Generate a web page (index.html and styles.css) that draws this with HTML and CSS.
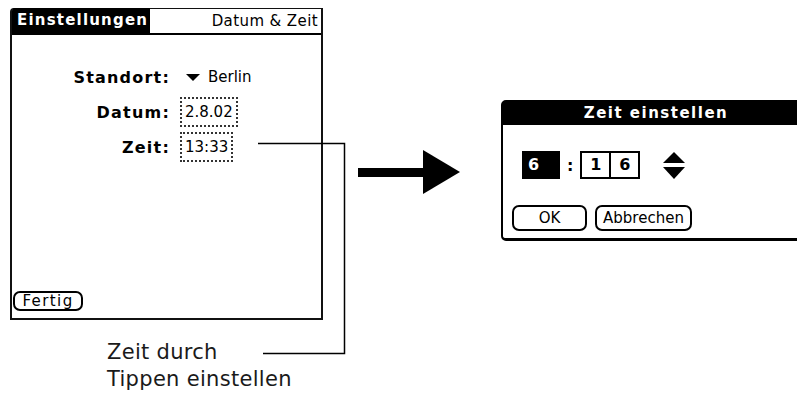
FILE: index.html
```html
<!DOCTYPE html>
<html lang="de">
<head>
    <meta charset="utf-8">
    <meta name="viewport" content="width=device-width, initial-scale=1.0">
    <title>Datum &amp; Zeit</title>
    <link rel="stylesheet" href="styles.css">
</head>
<body>
    <div class="page">
        <div class="left">
            <div class="screen">
                <div class="titlebar">
                    <span class="tab">Einstellungen</span>
                    <span class="panel">Datum &amp; Zeit</span>
                </div>
                <div class="fields">
                    <span class="label">Standort:</span>
                    <span class="value">
                        <svg class="drop" width="14" height="7" viewBox="0 0 14 7"><polygon points="0,0 14,0 7,7" fill="#000"/></svg>
                        <span class="berlin">Berlin</span>
                    </span>
                    <span class="label">Datum:</span>
                    <span class="value"><span class="dotted">2.8.02</span></span>
                    <span class="label">Zeit:</span>
                    <span class="value"><span class="dotted">13:33</span></span>
                </div>
                <button class="btn fertig" type="button">Fertig</button>
            </div>
            <p class="caption">Zeit durch<br>Tippen einstellen</p>
        </div>

        <svg class="arrow" width="102" height="44" viewBox="0 0 102 44">
            <rect x="0" y="18" width="66" height="9" fill="#000"/>
            <polygon points="65,0 102,22 65,44" fill="#000"/>
        </svg>

        <div class="dialog">
            <div class="dialog-title">Zeit einstellen</div>
            <div class="time-row">
                <span class="hour">6</span>
                <span class="colon">:</span>
                <span class="minutes">
                    <span class="digit">1</span>
                    <span class="digit">6</span>
                </span>
                <svg class="spin" width="22" height="27" viewBox="0 0 22 27">
                    <polygon points="0,11 22,11 11,0" fill="#000"/>
                    <polygon points="0,15 22,15 11,27" fill="#000"/>
                </svg>
            </div>
            <div class="buttons">
                <button class="btn ok" type="button">OK</button>
                <button class="btn cancel" type="button">Abbrechen</button>
            </div>
        </div>

        <svg class="callout" width="797" height="393" viewBox="0 0 797 393">
            <polyline points="258,143.5 344.5,143.5 344.5,353.5 263,353.5" fill="none" stroke="#000" stroke-width="1.5"/>
        </svg>
    </div>
</body>
</html>
```

FILE: styles.css
```css
body {
    margin: 0;
    width: 797px;
    height: 393px;
    overflow: hidden;
    background-color: #ffffff;
    font-family: "DejaVu Sans", sans-serif;
    color: #000;
}

.page {
    position: relative;
    display: flex;
    align-items: flex-start;
    padding: 8px 0 0 10px;
    height: 385px;
}

.left {
    width: 313px;
    flex-shrink: 0;
}

.screen {
    box-sizing: border-box;
    width: 313px;
    height: 312px;
    border: 2px solid #111;
    border-top-width: 1px;
    border-radius: 4px 0 0 0;
    display: flex;
    flex-direction: column;
}

.titlebar {
    display: flex;
    justify-content: space-between;
    align-items: stretch;
    height: 24px;
    border-bottom: 2px solid #000;
}

.tab {
    background-color: #000;
    color: #fff;
    font-weight: bold;
    font-size: 15px;
    letter-spacing: 1.2px;
    padding: 0 2px 0 5px;
    line-height: 25px;
    margin-top: -1px;
    border-radius: 3px 0 0 0;
}

.panel {
    font-size: 15px;
    letter-spacing: 0.4px;
    line-height: 24px;
    padding-right: 3px;
}

.fields {
    display: grid;
    grid-template-columns: 158px auto;
    grid-auto-rows: 30px;
    row-gap: 5px;
    column-gap: 10px;
    align-items: center;
    margin-top: 27px;
}

.label {
    text-align: right;
    font-weight: bold;
    font-size: 16px;
    letter-spacing: 1.2px;
}

.value {
    display: flex;
    align-items: center;
    font-size: 15px;
}

.drop {
    margin-left: 6px;
}

.berlin {
    margin-left: 8px;
}

.dotted {
    box-sizing: border-box;
    height: 30px;
    line-height: 26px;
    padding: 0 3px;
    border: 2px dotted #333;
}

.btn {
    box-sizing: border-box;
    font-family: "DejaVu Sans", sans-serif;
    font-size: 15px;
    color: #000;
    background-color: #fff;
    border: 2px solid #000;
    border-radius: 7px;
    padding: 0;
    cursor: pointer;
}

.fertig {
    margin: auto 0 7px 1px;
    width: 70px;
    height: 20px;
    line-height: 16px;
    letter-spacing: 1.4px;
    align-self: flex-start;
}

.caption {
    margin: 19px 0 0 97px;
    font-size: 21px;
    line-height: 27px;
    letter-spacing: 0.3px;
    color: #1a1a1a;
}

.arrow {
    flex-shrink: 0;
    margin: 142px 0 0 35px;
}

.dialog {
    flex-shrink: 0;
    box-sizing: border-box;
    width: 310px;
    margin: 92px 0 0 41px;
    border: 2px solid #000;
    border-bottom-width: 3px;
    border-radius: 5px 5px 0 5px;
    padding-bottom: 7px;
}

.dialog-title {
    height: 23px;
    line-height: 22px;
    background-color: #000;
    color: #fff;
    text-align: center;
    font-weight: bold;
    font-size: 15px;
    letter-spacing: 1.5px;
}

.time-row {
    display: flex;
    align-items: center;
    height: 28px;
    margin-top: 26px;
    padding-left: 19px;
    font-weight: bold;
    font-size: 16px;
}

.hour {
    box-sizing: border-box;
    width: 38px;
    height: 28px;
    line-height: 28px;
    padding-left: 6px;
    background-color: #000;
    color: #fff;
}

.colon {
    margin: 0 7px;
}

.minutes {
    box-sizing: border-box;
    display: flex;
    height: 28px;
    border: 2px solid #000;
}

.digit {
    width: 27px;
    line-height: 24px;
    text-align: center;
}

.digit + .digit {
    border-left: 2px solid #000;
}

.spin {
    margin-left: 23px;
}

.buttons {
    display: flex;
    gap: 8px;
    margin-top: 26px;
    padding-left: 9px;
}

.ok {
    width: 75px;
    height: 26px;
}

.cancel {
    width: 97px;
    height: 26px;
}

.callout {
    position: absolute;
    top: 0;
    left: 0;
    pointer-events: none;
}
```
